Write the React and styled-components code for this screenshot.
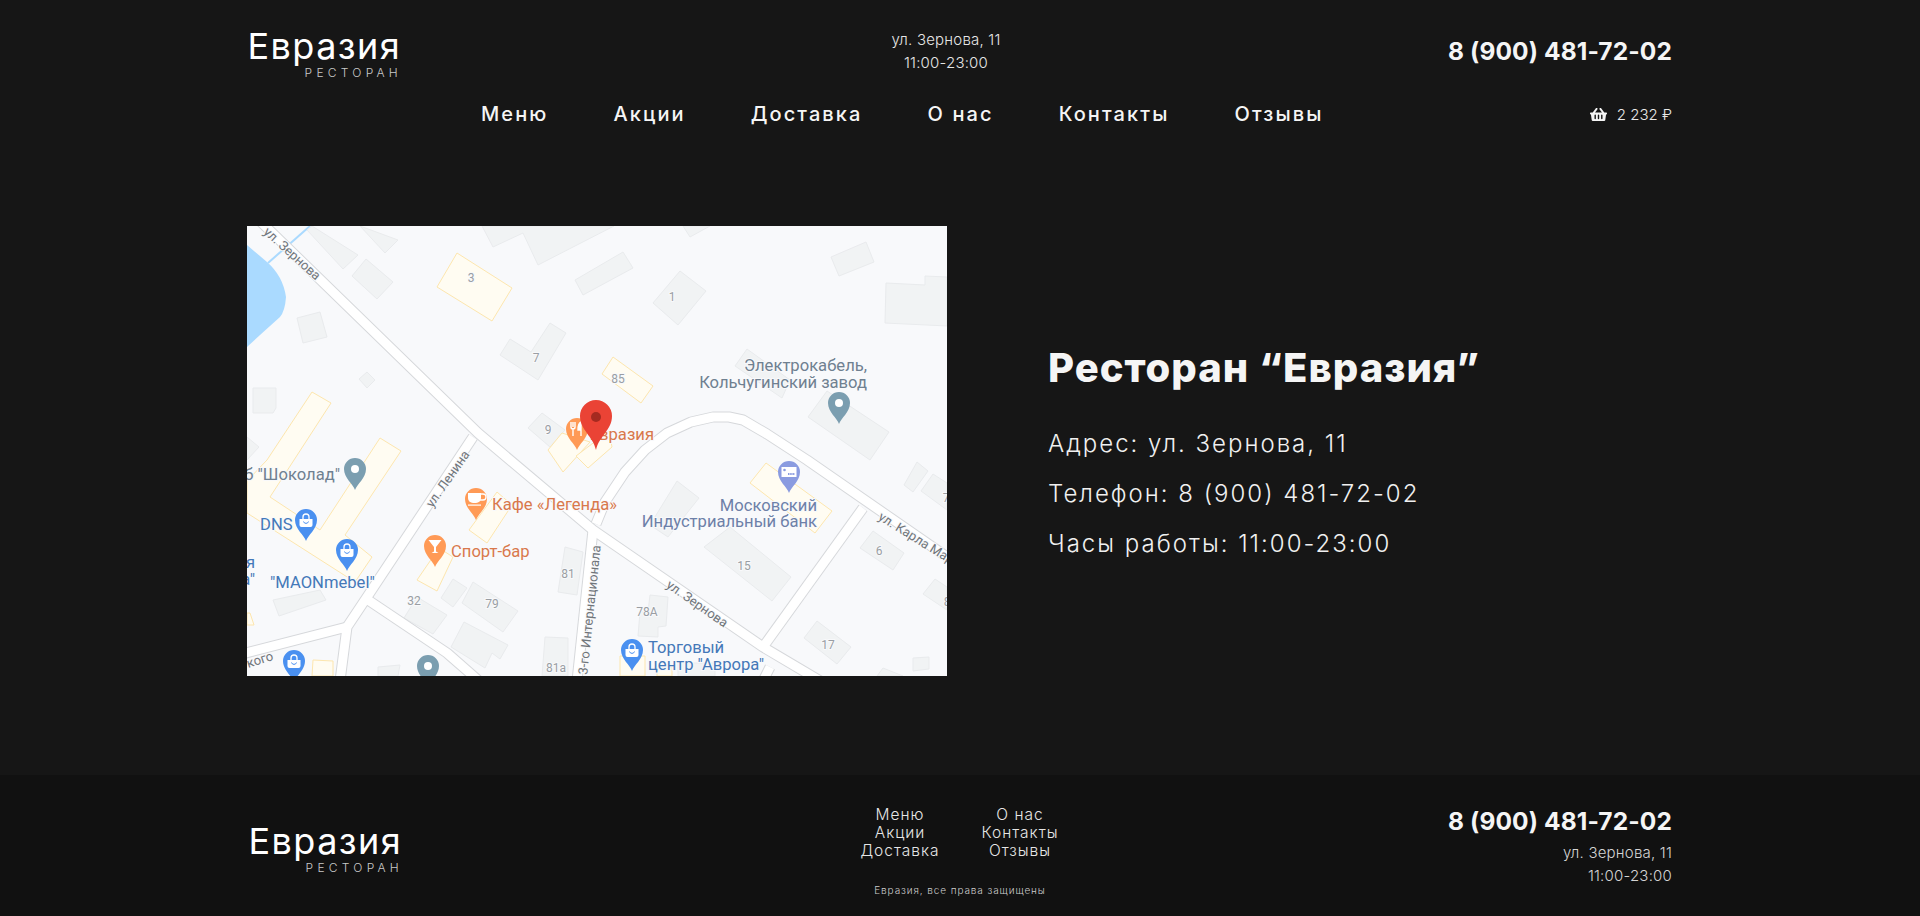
import React from "react";
import styled, {createGlobalStyle} from "styled-components";
import {FaShoppingBasket} from "react-icons/fa";

const GlobalStyle = createGlobalStyle`
  html, body {
    margin: 0;
    padding: 0;
    background: #161616;
    overflow: hidden;
  }
  * {
    box-sizing: border-box;
  }
  body {
    font-family: Inter, "Liberation Sans", sans-serif;
    color: #f5f5f5;
  }
`;

const Page = styled.div`
  width: 1920px;
  height: 916px;
  display: flex;
  flex-direction: column;
`;

const Wrap = styled.div`
  width: 1425px;
  margin-left: 247px;
`;

const Header = styled.header`
  height: 146px;
  padding-top: 26px;
`;

const HeaderTop = styled.div`
  display: grid;
  grid-template-columns: 589px 220px 1fr;
  height: 54px;
`;

const LogoBox = styled.div`
  display: inline-flex;
  flex-direction: column;
  align-items: flex-end;
  width: ${(p) => p.$width}px;
  margin-left: ${(p) => p.$left}px;
`;

const LogoName = styled.div`
  font-size: 36px;
  line-height: 40px;
  font-weight: 400;
  letter-spacing: 1.4px;
  margin-right: -1px;
  color: #fff;
  white-space: nowrap;
`;

const LogoSub = styled.div`
  font-size: 12px;
  line-height: 11px;
  font-weight: 300;
  letter-spacing: 4.25px;
  margin-right: -2px;
  margin-top: 1px;
  color: #c9c9c9;
`;

const HeaderInfo = styled.div`
  text-align: center;
  font-size: 15px;
  line-height: 23px;
  font-weight: 300;
  letter-spacing: 0.2px;
  padding-top: 2px;
  color: #e6e6e6;
`;

const Phone = styled.div`
  text-align: right;
  font-size: 24.5px;
  line-height: 30px;
  font-weight: 700;
  letter-spacing: 0.12px;
  color: #f5f5f5;
  padding-top: ${(p) => p.$top}px;
`;

const HeaderBottom = styled.div`
  display: flex;
  align-items: center;
  height: 36px;
  margin-top: 16px;
  padding-left: 234px;
`;

const Nav = styled.nav`
  display: flex;
  gap: 65px;
`;

const NavLink = styled.a`
  font-size: 20px;
  font-weight: 500;
  letter-spacing: 2.1px;
  color: #f5f5f5;
`;

const Basket = styled.div`
  margin-left: auto;
  display: flex;
  align-items: center;
  gap: 10px;
  font-size: 15px;
  font-weight: 300;
  color: #e8e8e8;
  svg {
    font-size: 17px;
    color: #f5f5f5;
  }
`;

const Main = styled.main`
  flex: 1;
  padding-top: 80px;
`;

const MainRow = styled(Wrap)`
  display: flex;
  align-items: center;
  height: 450px;
`;

const MapFrame = styled.svg`
  display: block;
  flex: none;
  width: 700px;
  height: 450px;
  background: #f8f9fb;
`;

const Info = styled.section`
  padding-left: 101px;
  padding-top: 11px;
`;

const Title = styled.h1`
  margin: 0 0 27px;
  font-size: 40px;
  line-height: 48px;
  font-weight: 800;
  letter-spacing: 1px;
  color: #f5f5f5;
  white-space: nowrap;
`;

const InfoLine = styled.p`
  margin: 0;
  font-size: 24px;
  line-height: 50px;
  font-weight: 300;
  letter-spacing: 2px;
  color: #f0f0f0;
  white-space: nowrap;
`;

const Footer = styled.footer`
  height: 141px;
  background: #111;
`;

const FooterRow = styled(Wrap)`
  display: grid;
  grid-template-columns: 593px 240px 1fr;
  height: 100%;
`;

const FooterLogo = styled.div`
  padding-top: 46px;
`;

const FooterMiddle = styled.div`
  padding-top: 31px;
`;

const FooterNav = styled.div`
  display: grid;
  grid-template-columns: 106px 106px;
  column-gap: 14px;
  justify-content: center;
  text-align: center;
  font-size: 15.5px;
  line-height: 18px;
  font-weight: 300;
  letter-spacing: 1px;
  color: #e6e6e6;
`;

const Copyright = styled.div`
  margin-top: 23px;
  text-align: center;
  font-size: 10px;
  line-height: 14px;
  font-weight: 300;
  letter-spacing: 0.9px;
  color: #cdcdcd;
`;

const FooterContacts = styled.div`
  padding-top: 31px;
`;

const FooterInfo = styled.div`
  margin-top: 5px;
  text-align: right;
  font-size: 15px;
  line-height: 23px;
  font-weight: 300;
  letter-spacing: 0.2px;
  color: #d4d4d4;
`;

const Block = styled.polygon`
  fill: ${(p) => (p.$yellow ? "#fffcf2" : "#f1f3f4")};
  stroke: ${(p) => (p.$yellow ? "#fde6ae" : "#e9ebed")};
  stroke-width: 1;
`;

const Water = styled.path`
  fill: #aadaff;
`;

const Stream = styled.line`
  stroke: #aadaff;
  stroke-width: 2;
`;

const RoadLine = styled.polyline`
  fill: none;
  stroke: ${(p) => (p.$casing ? "#d6d8db" : "#fff")};
  stroke-width: ${(p) => p.$w}px;
  stroke-linejoin: round;
`;

const MapLabel = styled.text`
  font-family: Roboto, "Liberation Sans", sans-serif;
  font-size: ${(p) => p.$size || 16.6}px;
  fill: ${(p) => p.$color};
  stroke: #f8f9fb;
  stroke-width: 2px;
  paint-order: stroke;
  text-anchor: ${(p) => p.$anchor || "start"};
`;

const grayBlocks = [
  "65,0 111,29 96,43 60,4",
  "113,0 151,14 138,27",
  "119,33 146,56 130,73 105,50",
  "50,92 73,86 80,111 56,117",
  "120,146 128,154 120,162 112,153",
  "6,162 29,162 29,182 26,187 6,187",
  "0,211 12,221 0,234",
  "235,0 246,21 276,7 291,39 367,0",
  "328,54 336,69 386,42 376,26",
  "436,0 443,11 463,0",
  "303,97 319,107 291,154 253,129 263,113 284,126",
  "295,187 318,204 303,221 281,202",
  "433,45 459,65 431,99 406,77",
  "584,31 619,16 627,36 592,50",
  "639,57 678,59 678,50 700,51 700,100 638,97",
  "500,123 543,154 535,172 488,140",
  "580,165 642,206 623,234 561,191",
  "430,255 452,272 421,311 403,299",
  "483,301 544,351 525,375 457,321",
  "626,305 657,327 646,344 613,322",
  "670,236 681,245 666,266 657,259",
  "686,248 700,257 700,284 674,265",
  "688,353 700,361 700,384 676,368",
  "570,395 604,421 590,438 557,412",
  "666,432 682,431 682,443 666,445",
  "636,442 656,450 630,450",
  "403,369 421,371 419,400 411,401 411,411 391,410 393,386 401,386",
  "431,437 468,437 468,450 431,450",
  "73,364 79,374 32,390 26,374",
  "170,371 200,389 186,408 157,392",
  "206,353 220,362 206,381 194,372",
  "226,356 271,385 256,406 215,377",
  "217,396 261,419 253,433 245,427 238,442 204,421",
  "318,321 336,326 330,369 311,366",
  "298,411 321,412 321,450 295,450",
  "131,441 153,439 151,450 131,450",
];

const yellowBlocks = [
  "210,27 265,62 245,95 190,61",
  "65,166 84,177 23,271 73,304 133,212 154,225 98,309 125,331 108,356 0,287 0,255 20,234",
  "315,207 343,216 316,246 301,224",
  "362,205 365,221 341,242 329,230",
  "366,131 406,160 394,177 355,148",
  "250,266 265,279 240,317 222,304",
  "192,322 206,331 190,365 170,354",
  "519,237 585,285 568,307 503,257",
  "66,434 86,435 86,450 65,450",
  "373,430 398,430 398,450 373,450",
  "410,441 425,441 425,450 410,450",
  "0,387 3,387 7,399 0,399",
];

const roads = [
  "13,-5 231,207 346,304 516,421 575,456",
  "349,298 358,276 378,246 398,224 420,207 444,196 466,191 482,191 496,194 520,208 560,234 700,331",
  "616,282 516,421",
  "226,211 120,371 100,401 93,455",
  "121,374 200,427 232,455",
  "-5,428 100,401",
  "346,304 330,455",
  "523,441 516,455",
];

const numbers = [
  ["3", 224, 56],
  ["7", 289, 136],
  ["9", 301, 208],
  ["1", 425, 75],
  ["85", 371, 157],
  ["32", 167, 379],
  ["79", 245, 382],
  ["81", 321, 352],
  ["81а", 309, 446],
  ["78А", 400, 390],
  ["15", 497, 344],
  ["6", 632, 329],
  ["17", 581, 423],
  ["7", 699, 276],
  ["8", 700, 380],
];

const streets = [
  ["ул. Зернова", 45, 32, 42],
  ["ул. Зернова", 450, 382, 35],
  ["ул. Ленина", 201, 257, -55],
  ["ул. Карла Маркса", 678, 322, 32],
  ["3-го Интернационала", 343, 388, -84],
  ["кого", 13, 438, -18],
];

const PIN = "M0 0C-2-6-11-12-11-21A11 11 0 1 1 11-21C11-12 2-6 0 0Z";

// white glyphs drawn inside the pin heads, origin at the tip
const glyphs = {
  dot: <circle cx="0" cy="-21" r="4" fill="#fff" />,
  bag: (
    <g>
      <path d="M-6.500-22h13v6a2 2 0 0 1-2 2h-9a2 2 0 0 1-2-2z" fill="#fff" />
      <path d="M-3-22v-2a3 3 0 0 1 6 0v2" fill="none" stroke="#fff" strokeWidth="1.3" />
      <path d="M-2.500-19.500a2.600 2.600 0 0 0 5 0" fill="none" stroke="#4a90f0" strokeWidth="1" />
    </g>
  ),
  fork: (
    <g fill="none" stroke="#fff" strokeWidth="1.4">
      <path d="M-4-28v5M-2-28v5M-6-28v5M-6-23a2 2 0 0 0 4 0M-4-22v8" />
      <path d="M4-14v-14c-2 1-3 4-3 8h3" fill="#fff" />
    </g>
  ),
  cup: (
    <g fill="#fff">
      <path d="M-8-27H5v5a5 5 0 0 1-5 5h-3a5 5 0 0 1-5-5z" />
      <path d="M5-26h2a2.500 2.500 0 0 1 0 6H4" fill="none" stroke="#fff" strokeWidth="1.3" />
      <rect x="-8" y="-15.500" width="13" height="1.200" />
    </g>
  ),
  glass: (
    <g fill="#fff">
      <path d="M-6.500-27H6.500L1-20v4.500L3.500-14h-7L-1-15.500V-20z" />
    </g>
  ),
  note: (
    <g>
      <rect x="-7.500" y="-26" width="15" height="10" fill="#fff" />
      <circle cx="-4.500" cy="-23" r="1.300" fill="#8a9be0" />
      <path d="M-1-19h7" stroke="#8a9be0" strokeWidth="2" strokeDasharray="1.500 .7" />
    </g>
  ),
};

const pins = [
  [592, 198, "#7b9eb0", "dot"],
  [108, 264, "#7b9eb0", "dot"],
  [181, 461, "#7b9eb0", "dot"],
  [59, 315, "#4a90f0", "bag"],
  [100, 345, "#4a90f0", "bag"],
  [385, 445, "#4a90f0", "bag"],
  [47, 456, "#4a90f0", "bag"],
  [229, 294, "#ff9a56", "cup"],
  [188, 341, "#ff9a56", "glass"],
  [330, 224, "#ff9a56", "fork"],
  [542, 267, "#8a9be0", "note"],
];

const GREY = "#6f8090";
const BLUE = "#4478b8";
const ORANGE = "#d9784c";
const BANK = "#6d80a8";

const labels = [
  ["Электрокабель,", 620, 145, GREY, "end"],
  ["Кольчугинский завод", 620, 162, GREY, "end"],
  ["Евразия", 407, 214, ORANGE, "end"],
  ['б "Шоколад"', 93, 254, GREY, "end"],
  ["DNS", 13, 304, BLUE],
  ["я", 8, 342, BLUE, "end"],
  ['а"', 8, 359, BLUE, "end"],
  ['"MAONmebel"', 23, 362, BLUE],
  ["Кафе «Легенда»", 245, 284, ORANGE],
  ["Спорт-бар", 204, 331, ORANGE],
  ["Московский", 570, 285, BANK, "end"],
  ["Индустриальный банк", 570, 301, BANK, "end"],
  ["Торговый", 401, 427, BLUE],
  ['центр "Аврора"', 401, 444, BLUE],
];

const MapPicture = () => (
  <MapFrame viewBox="0 0 700 450">
    <Water d="M0 19L20 36Q36 50 39 71Q38 85 33 91L13 109L0 121Z" />
    <Stream x1="21" y1="37" x2="63" y2="0" />
    {grayBlocks.map((points) => (
      <Block key={points} points={points} />
    ))}
    {yellowBlocks.map((points) => (
      <Block key={points} points={points} $yellow />
    ))}
    {roads.map((points) => (
      <RoadLine key={points} points={points} $casing $w={11} />
    ))}
    {roads.map((points) => (
      <RoadLine key={points} points={points} $w={9} />
    ))}
    {numbers.map(([text, x, y]) => (
      <MapLabel key={`${text}${x}`} x={x} y={y} $size={12} $color="#9a9ea3" $anchor="middle">
        {text}
      </MapLabel>
    ))}
    {streets.map(([text, x, y, angle]) => (
      <MapLabel key={`${text}${x}`} x={x} y={y} $size={13} $color="#70757a" $anchor="middle" transform={`rotate(${angle} ${x} ${y - 4})`}>
        {text}
      </MapLabel>
    ))}
    {labels.map(([text, x, y, color, anchor]) => (
      <MapLabel key={text} x={x} y={y} $color={color} $anchor={anchor}>
        {text}
      </MapLabel>
    ))}
    {pins.map(([x, y, color, glyph]) => (
      <g key={`${x}${y}`} transform={`translate(${x} ${y})`}>
        <path d={PIN} fill={color} />
        {glyphs[glyph]}
      </g>
    ))}
    <g transform="translate(349 224)">
      <path d="M0 0C-3-14-16-20-16-34A16 16 0 1 1 16-34C16-20 3-14 0 0Z" fill="#ea4335" />
      <circle cx="0" cy="-33" r="5" fill="#a52a20" />
    </g>
  </MapFrame>
);

const Logo = ({width, left}) => (
  <LogoBox $width={width} $left={left}>
    <LogoName>Евразия</LogoName>
    <LogoSub>РЕСТОРАН</LogoSub>
  </LogoBox>
);

const menu = ["Меню", "Акции", "Доставка", "О нас", "Контакты", "Отзывы"];
const footerMenu = ["Меню", "О нас", "Акции", "Контакты", "Доставка", "Отзывы"];

export default function App() {
  return (
    <Page>
      <GlobalStyle />
      <Header>
        <Wrap>
          <HeaderTop>
            <div>
              <Logo width={152} left={1} />
            </div>
            <HeaderInfo>
              ул. Зернова, 11
              <br />
              11:00-23:00
            </HeaderInfo>
            <Phone $top={10}>8 (900) 481-72-02</Phone>
          </HeaderTop>
          <HeaderBottom>
            <Nav>
              {menu.map((item) => (
                <NavLink key={item}>{item}</NavLink>
              ))}
            </Nav>
            <Basket>
              <FaShoppingBasket />
              <span>2 232 ₽</span>
            </Basket>
          </HeaderBottom>
        </Wrap>
      </Header>
      <Main>
        <MainRow>
          <MapPicture />
          <Info>
            <Title>Ресторан “Евразия”</Title>
            <InfoLine>Адрес: ул. Зернова, 11</InfoLine>
            <InfoLine>Телефон: 8 (900) 481-72-02</InfoLine>
            <InfoLine>Часы работы: 11:00-23:00</InfoLine>
          </Info>
        </MainRow>
      </Main>
      <Footer>
        <FooterRow>
          <FooterLogo>
            <Logo width={152} left={2} />
          </FooterLogo>
          <FooterMiddle>
            <FooterNav>
              {footerMenu.map((item) => (
                <span key={item}>{item}</span>
              ))}
            </FooterNav>
            <Copyright>Евразия, все права защищены</Copyright>
          </FooterMiddle>
          <FooterContacts>
            <Phone $top={0}>8 (900) 481-72-02</Phone>
            <FooterInfo>
              ул. Зернова, 11
              <br />
              11:00-23:00
            </FooterInfo>
          </FooterContacts>
        </FooterRow>
      </Footer>
    </Page>
  );
}
